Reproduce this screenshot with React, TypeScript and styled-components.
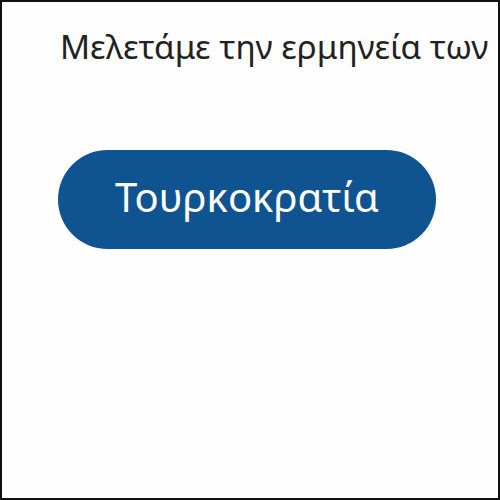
import React from 'react'
import styled, { createGlobalStyle } from 'styled-components'

const GlobalStyle = createGlobalStyle`
  html, body {
    margin: 0;
    padding: 0;
    background: #ffffff;
  }
`

const Frame = styled.div`
  box-sizing: border-box;
  width: 500px;
  height: 500px;
  border: 2px solid #111111;
  background: #fefefe;
  overflow: hidden;
  padding: 22px 0 0 58px;
  font-family: 'Noto Sans', 'DejaVu Sans', sans-serif;
`

const Heading = styled.p`
  margin: 0;
  font-size: 33.2px;
  line-height: 45px;
  color: #222222;
  white-space: nowrap;
`

const TopicButton = styled.button`
  display: flex;
  align-items: center;
  justify-content: center;
  margin: 81px 0 0 -2px;
  width: 378px;
  height: 99px;
  border: none;
  border-radius: 50px;
  background: #0f5391;
  color: #ffffff;
  font-family: inherit;
  font-size: 40px;
  padding: 0 0 6px;
  cursor: pointer;
`

export default function App() {
  return (
    <>
      <GlobalStyle />
      <Frame>
        <Heading>Μελετάμε την ερμηνεία των</Heading>
        <TopicButton>Τουρκοκρατία</TopicButton>
      </Frame>
    </>
  )
}
